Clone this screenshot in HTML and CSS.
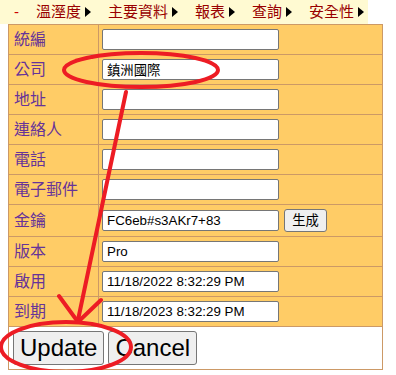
FILE: index.html
```html
<!DOCTYPE html>
<html lang="zh-Hant">
<head>
    <meta charset="UTF-8">
    <title>公司資料</title>
    <link rel="stylesheet" href="styles.css">
</head>
<body>

<div class="menu-bar">
    <span class="menu-dash">-</span>
    <span class="menu-item">溫溼度<i class="arrow"></i></span>
    <span class="menu-item">主要資料<i class="arrow"></i></span>
    <span class="menu-item">報表<i class="arrow"></i></span>
    <span class="menu-item">查詢<i class="arrow"></i></span>
    <span class="menu-item">安全性<i class="arrow"></i></span>
</div>

<table class="edit-table">
    <tr>
        <td class="label">統編</td>
        <td><div class="cell"><input type="text" class="field" value=""></div></td>
    </tr>
    <tr>
        <td class="label">公司</td>
        <td><div class="cell"><input type="text" class="field" value="鎮洲國際"></div></td>
    </tr>
    <tr>
        <td class="label">地址</td>
        <td><div class="cell"><input type="text" class="field" value=""></div></td>
    </tr>
    <tr>
        <td class="label">連絡人</td>
        <td><div class="cell"><input type="text" class="field" value=""></div></td>
    </tr>
    <tr>
        <td class="label">電話</td>
        <td><div class="cell"><input type="text" class="field" value=""></div></td>
    </tr>
    <tr>
        <td class="label">電子郵件</td>
        <td><div class="cell"><input type="text" class="field" value=""></div></td>
    </tr>
    <tr>
        <td class="label">金鑰</td>
        <td><div class="cell"><input type="text" class="field" value="FC6eb#s3AKr7+83"><button class="small-button">生成</button></div></td>
    </tr>
    <tr>
        <td class="label">版本</td>
        <td><div class="cell"><input type="text" class="field" value="Pro"></div></td>
    </tr>
    <tr>
        <td class="label">啟用</td>
        <td><div class="cell"><input type="text" class="field" value="11/18/2022 8:32:29 PM"></div></td>
    </tr>
    <tr>
        <td class="label">到期</td>
        <td><div class="cell"><input type="text" class="field" value="11/18/2023 8:32:29 PM"></div></td>
    </tr>
    <tr>
        <td class="actions" colspan="2"><div class="button-row"><button class="big-button">Update</button><button class="big-button">Cancel</button></div></td>
    </tr>
</table>

<!-- red hand-drawn marks on top of the screenshot -->
<svg class="marks" width="396" height="375" viewBox="0 0 396 375">
    <ellipse cx="141" cy="70" rx="77" ry="17" />
    <path d="M126 92 L78 320" />
    <path d="M59 296 L78 322 L101 300" />
    <ellipse cx="66" cy="347" rx="65" ry="25" />
</svg>

</body>
</html>
```

FILE: styles.css
```css
body {
    margin: 0;
    font-family: "Liberation Sans", "Noto Sans CJK TC", sans-serif;
    background: white;
    position: relative;
}
.menu-bar {
    width: 368px;
    height: 24px;
    background-color: #fffad2;
    display: flex;
    align-items: center;
    gap: 17px;
    padding-left: 14px;
    box-sizing: border-box;
    font-size: 15px;
    color: #990000;
    line-height: 24px;
    white-space: nowrap;
}
.menu-dash {
    color: #cc0000;
    flex-shrink: 0;
}
.menu-item {
    display: flex;
    align-items: center;
    gap: 4px;
    flex-shrink: 0;
}
.arrow {
    width: 0;
    height: 0;
    border-top: 5px solid transparent;
    border-bottom: 5px solid transparent;
    border-left: 6px solid #000;
}
.edit-table {
    margin-left: 8px;
    width: 375px;
    border-collapse: collapse;
    background-color: #ffcc66;
    border: 1px solid #cc9966;
}
.edit-table td {
    border: 1px solid #cc9966;
    padding: 4px 3px;
    line-height: 21px;
    white-space: nowrap;
}
.edit-table td.label {
    width: 81px;
    padding-left: 5px;
    color: #663399;
    font-size: 16px;
}
.cell {
    display: flex;
    align-items: center;
    gap: 5px;
    min-height: 21px;
}
.field {
    width: 177px;
    height: 21px;
    box-sizing: border-box;
    border: 1px solid #767676;
    border-radius: 2px;
    padding: 1px 4px;
    font-family: "Liberation Sans", "Noto Sans CJK TC", sans-serif;
    font-size: 13.33px;
    line-height: 17px;
}
.small-button {
    height: 23px;
    width: 43px;
    padding: 0;
    font-family: "Liberation Sans", "Noto Sans CJK TC", sans-serif;
    font-size: 13.33px;
    line-height: 19px;
    background: #efefef;
    border: 1px solid #767676;
    border-radius: 3px;
}
.edit-table td.actions {
    background-color: white;
    padding: 4px;
}
.button-row {
    display: flex;
    gap: 4px;
}
.big-button {
    font-family: "Liberation Sans", sans-serif;
    font-size: 24px;
    height: 34px;
    line-height: 28px;
    padding: 1px 6px;
    background: #efefef;
    border: 1px solid #767676;
    border-radius: 3px;
    color: #000;
}
.marks {
    position: absolute;
    left: 0;
    top: 0;
    pointer-events: none;
}
.marks ellipse,
.marks path {
    fill: none;
    stroke: #ed1c24;
    stroke-width: 4;
    stroke-linecap: round;
    stroke-linejoin: round;
}
```
